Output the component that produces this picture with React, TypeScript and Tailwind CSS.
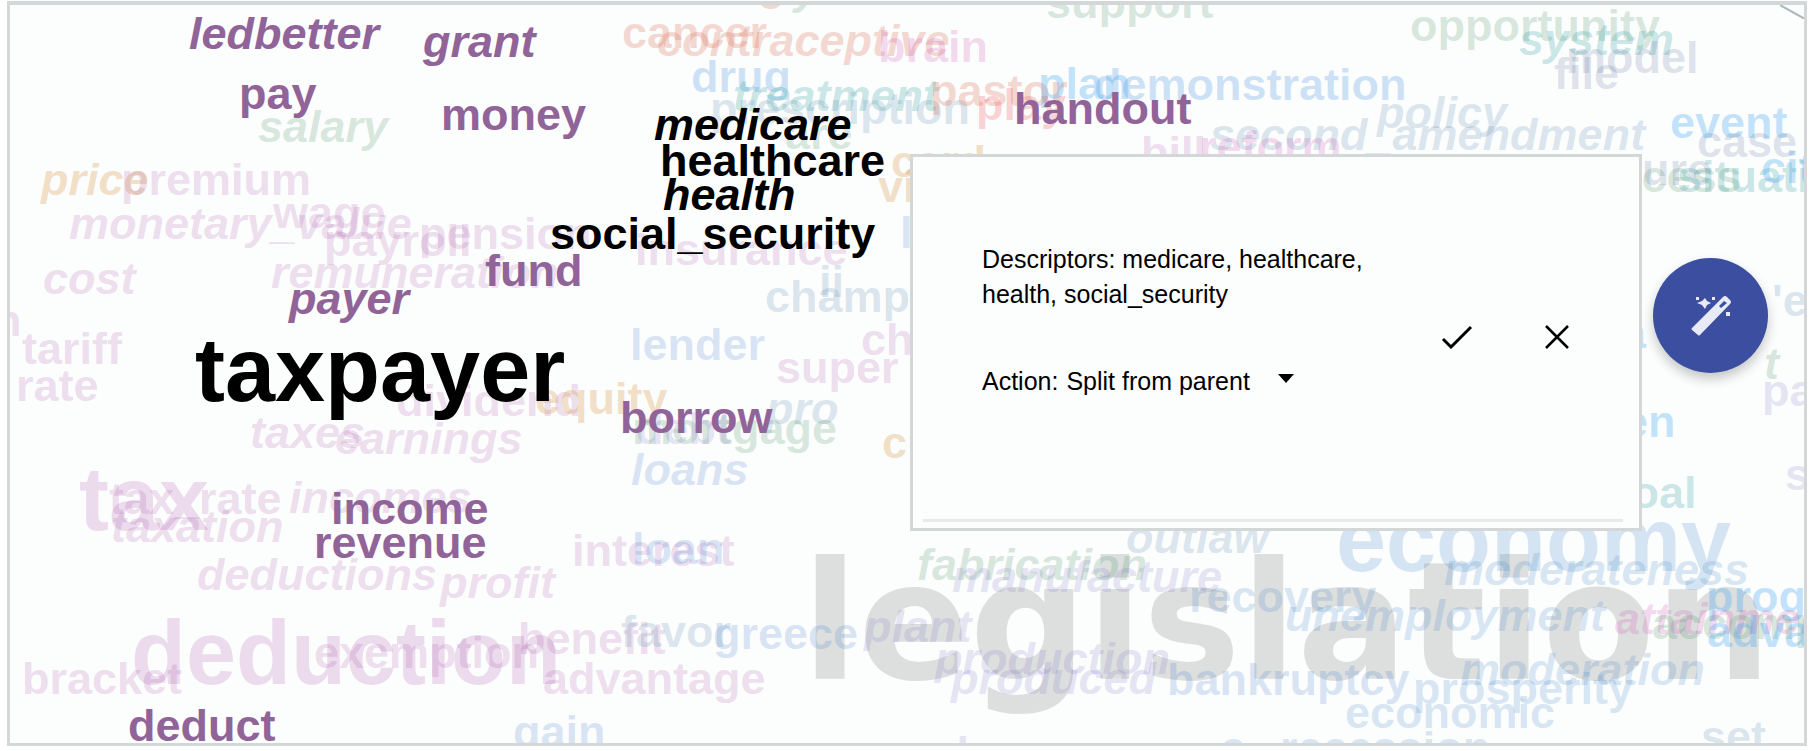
import { useState } from "react";

type Tone =
  | "black"
  | "plum"
  | "mauve"
  | "pink"
  | "salmon"
  | "red"
  | "tan"
  | "green"
  | "teal"
  | "cyan"
  | "sky"
  | "blue"
  | "azure"
  | "slate"
  | "steel"
  | "lavender"
  | "gray";

type Size = "base" | "large" | "huge";

interface Word {
  text: string;
  x: number;
  baseline: number;
  tone: Tone;
  italic?: boolean;
  size?: Size;
}

const toneClass: Record<Tone, string> = {
  black: "text-black",
  plum: "text-[#916499]",
  mauve: "text-[#a040a0]/18",
  pink: "text-[#d040b0]/20",
  salmon: "text-[#d86a50]/26",
  red: "text-[#f04040]/22",
  tan: "text-[#d89440]/30",
  green: "text-[#3c8a5c]/20",
  teal: "text-[#209898]/24",
  cyan: "text-[#30a0f0]/28",
  sky: "text-[#3c90e0]/25",
  blue: "text-[#3c78d0]/20",
  azure: "text-[#3c84c8]/20",
  slate: "text-[#5080a8]/20",
  steel: "text-[#5a6ea0]/20",
  lavender: "text-[#6a60c0]/18",
  gray: "text-[#dddfde]",
};

const sizeClass: Record<Size, string> = {
  base: "text-[45px]",
  large: "text-[90px]",
  huge: "font-['DejaVu_Sans',sans-serif] text-[164px]",
};

const ascent: Record<Size, number> = { base: 38, large: 76, huge: 139 };

const words: Word[] = [
  { text: "legislation", x: 792, baseline: 675, tone: "gray", size: "huge" },
  { text: "salary", x: 248, baseline: 137, tone: "green", italic: true },
  { text: "price", x: 31, baseline: 190, tone: "tan", italic: true },
  { text: "premium", x: 111, baseline: 190, tone: "mauve" },
  { text: "monetary_value", x: 59, baseline: 234, tone: "mauve", italic: true },
  { text: "wage", x: 263, baseline: 223, tone: "mauve" },
  { text: "payroll", x: 314, baseline: 251, tone: "mauve" },
  { text: "pension", x: 409, baseline: 244, tone: "mauve" },
  { text: "remuneration", x: 261, baseline: 283, tone: "mauve", italic: true },
  { text: "cost", x: 33, baseline: 289, tone: "mauve", italic: true },
  { text: "n", x: -16, baseline: 331, tone: "mauve" },
  { text: "tariff", x: 12, baseline: 359, tone: "mauve" },
  { text: "rate", x: 6, baseline: 396, tone: "mauve" },
  { text: "dividend", x: 386, baseline: 411, tone: "mauve" },
  { text: "equity", x: 525, baseline: 409, tone: "tan" },
  { text: "taxes", x: 240, baseline: 443, tone: "mauve", italic: true },
  { text: "earnings", x: 325, baseline: 449, tone: "mauve", italic: true },
  { text: "tax", x: 69, baseline: 525, tone: "mauve", size: "large" },
  { text: "tax_rate", x: 99, baseline: 509, tone: "mauve" },
  { text: "taxation", x: 101, baseline: 537, tone: "mauve", italic: true },
  { text: "incomes", x: 279, baseline: 508, tone: "mauve", italic: true },
  { text: "deductions", x: 187, baseline: 585, tone: "mauve", italic: true },
  { text: "profit", x: 430, baseline: 593, tone: "mauve", italic: true },
  { text: "interest", x: 562, baseline: 561, tone: "mauve" },
  { text: "deduction", x: 121, baseline: 679, tone: "mauve", size: "large" },
  { text: "exemption", x: 304, baseline: 663, tone: "mauve" },
  { text: "benefit", x: 508, baseline: 649, tone: "mauve" },
  { text: "bracket", x: 12, baseline: 689, tone: "mauve" },
  { text: "advantage", x: 533, baseline: 689, tone: "mauve" },
  { text: "gain", x: 503, baseline: 742, tone: "blue" },
  { text: "o", x: 747, baseline: 4, tone: "salmon" },
  { text: "y", x: 784, baseline: -1, tone: "green", italic: true },
  { text: "cancer", x: 612, baseline: 43, tone: "salmon" },
  { text: "contraceptive", x: 647, baseline: 51, tone: "salmon", italic: true },
  { text: "brain", x: 868, baseline: 57, tone: "pink" },
  { text: "drug", x: 681, baseline: 87, tone: "sky" },
  { text: "prescription", x: 700, baseline: 119, tone: "slate" },
  { text: "treatment", x: 723, baseline: 106, tone: "teal", italic: true },
  { text: "pastor", x: 920, baseline: 101, tone: "salmon" },
  { text: "play", x: 966, baseline: 115, tone: "red" },
  { text: "plan", x: 1028, baseline: 94, tone: "cyan" },
  { text: "demonstration", x: 1084, baseline: 95, tone: "sky" },
  { text: "support", x: 1036, baseline: 13, tone: "green" },
  { text: "bill", x: 1131, baseline: 163, tone: "mauve" },
  { text: "reform", x: 1189, baseline: 157, tone: "pink" },
  { text: "are", x: 775, baseline: 144, tone: "green" },
  { text: "card", x: 881, baseline: 172, tone: "tan" },
  { text: "virus", x: 868, baseline: 197, tone: "tan" },
  { text: "insurance", x: 625, baseline: 260, tone: "mauve" },
  { text: "law", x: 890, baseline: 243, tone: "blue" },
  { text: "champion", x: 755, baseline: 307, tone: "slate" },
  { text: "ii", x: 809, baseline: 292, tone: "slate" },
  { text: "lender", x: 620, baseline: 355, tone: "blue" },
  { text: "child", x: 851, baseline: 350, tone: "mauve" },
  { text: "super", x: 766, baseline: 378, tone: "mauve" },
  { text: "pro", x: 756, baseline: 419, tone: "slate", italic: true },
  { text: "mortgage", x: 622, baseline: 439, tone: "green" },
  { text: "debt", x: 626, baseline: 439, tone: "lavender" },
  { text: "loans", x: 621, baseline: 480, tone: "blue", italic: true },
  { text: "c", x: 872, baseline: 453, tone: "tan" },
  { text: "loan", x: 622, baseline: 559, tone: "blue" },
  { text: "favor", x: 611, baseline: 642, tone: "slate" },
  { text: "greece", x: 703, baseline: 644, tone: "blue" },
  { text: "plant", x: 854, baseline: 637, tone: "lavender", italic: true },
  { text: "fabrication", x: 907, baseline: 575, tone: "green", italic: true },
  { text: "manufacture", x: 942, baseline: 587, tone: "lavender", italic: true },
  { text: "production", x: 925, baseline: 669, tone: "lavender", italic: true },
  { text: "produced", x: 941, baseline: 689, tone: "lavender", italic: true },
  { text: "bankruptcy", x: 1157, baseline: 690, tone: "blue" },
  { text: "recovery", x: 1179, baseline: 607, tone: "azure" },
  { text: "outlaw", x: 1116, baseline: 548, tone: "slate", italic: true },
  { text: "purchase", x: 849, baseline: 763, tone: "lavender" },
  { text: "economy", x: 1326, baseline: 566, tone: "azure", size: "large" },
  { text: "moderateness", x: 1434, baseline: 580, tone: "azure", italic: true },
  { text: "unemployment", x: 1275, baseline: 626, tone: "azure", italic: true },
  { text: "moderation", x: 1450, baseline: 680, tone: "azure", italic: true },
  { text: "prosperity", x: 1403, baseline: 699, tone: "azure" },
  { text: "economic", x: 1335, baseline: 723, tone: "azure" },
  { text: "recession", x: 1270, baseline: 758, tone: "azure" },
  { text: "a", x: 1211, baseline: 758, tone: "azure" },
  { text: "set", x: 1691, baseline: 747, tone: "slate" },
  { text: "progress", x: 1696, baseline: 607, tone: "cyan" },
  { text: "attainment", x: 1605, baseline: 629, tone: "pink", italic: true },
  { text: "accomplish", x: 1642, baseline: 634, tone: "green" },
  { text: "advance", x: 1697, baseline: 642, tone: "cyan" },
  { text: "goal", x: 1594, baseline: 503, tone: "teal" },
  { text: "open", x: 1558, baseline: 432, tone: "cyan" },
  { text: "part", x: 1752, baseline: 401, tone: "lavender" },
  { text: "t", x: 1754, baseline: 374, tone: "green", italic: true },
  { text: "sale", x: 1775, baseline: 485, tone: "lavender" },
  { text: "'e", x: 1762, baseline: 311, tone: "slate" },
  { text: "a", x: 1611, baseline: 343, tone: "cyan" },
  { text: "opportunity", x: 1400, baseline: 36, tone: "green" },
  { text: "system", x: 1509, baseline: 50, tone: "teal", italic: true },
  { text: "model", x: 1556, baseline: 68, tone: "steel" },
  { text: "file", x: 1544, baseline: 84, tone: "steel" },
  { text: "policy", x: 1367, baseline: 123, tone: "slate", italic: true },
  { text: "second_amendment", x: 1200, baseline: 145, tone: "slate", italic: true },
  { text: "event", x: 1660, baseline: 133, tone: "cyan" },
  { text: "case", x: 1687, baseline: 152, tone: "steel" },
  { text: "ure", x: 1632, baseline: 180, tone: "steel" },
  { text: "success", x: 1554, baseline: 187, tone: "green" },
  { text: "situation", x: 1667, baseline: 187, tone: "teal" },
  { text: "citizen", x: 1751, baseline: 178, tone: "cyan" },
  { text: "ledbetter", x: 179, baseline: 44, tone: "plum", italic: true },
  { text: "grant", x: 413, baseline: 52, tone: "plum", italic: true },
  { text: "pay", x: 229, baseline: 104, tone: "plum" },
  { text: "money", x: 431, baseline: 125, tone: "plum" },
  { text: "handout", x: 1004, baseline: 119, tone: "plum" },
  { text: "fund", x: 475, baseline: 281, tone: "plum" },
  { text: "payer", x: 279, baseline: 309, tone: "plum", italic: true },
  { text: "borrow", x: 610, baseline: 428, tone: "plum" },
  { text: "income", x: 321, baseline: 519, tone: "plum" },
  { text: "revenue", x: 304, baseline: 553, tone: "plum" },
  { text: "deduct", x: 118, baseline: 736, tone: "plum" },
  { text: "medicare", x: 644, baseline: 135, tone: "black", italic: true },
  { text: "healthcare", x: 650, baseline: 171, tone: "black" },
  { text: "health", x: 653, baseline: 205, tone: "black", italic: true },
  { text: "social_security", x: 540, baseline: 244, tone: "black" },
  { text: "taxpayer", x: 185, baseline: 396, tone: "black", size: "large" },
];

function CloudWord({ text, x, baseline, tone, italic, size = "base" }: Word) {
  return (
    <span
      className={`absolute leading-none font-bold whitespace-nowrap ${sizeClass[size]} ${toneClass[tone]} ${italic ? "italic" : ""}`}
      style={{ left: x, top: baseline - ascent[size] }}
    >
      {text}
    </span>
  );
}

function ActionPanel() {
  const [action, setAction] = useState("split");
  return (
    <section
      aria-label="Descriptor action"
      className="absolute top-[149px] left-[900px] flex w-[732px] flex-col border-3 border-[#d3d7d8] bg-[#fcfdfd] pt-[85px] text-[25px] leading-[35px] text-black"
    >
      <div className="flex items-end justify-between pr-[58px] pl-[69px]">
        <div className="flex w-[400px] flex-col gap-[52px]">
          <p>Descriptors: medicare, healthcare, health, social_security</p>
          <div className="flex items-center gap-2">
            <label htmlFor="action">Action:</label>
            <div className="relative flex w-60 items-center">
              <select
                id="action"
                value={action}
                onChange={(e) => setAction(e.target.value)}
                className="w-full appearance-none bg-transparent outline-none"
              >
                <option value="split">Split from parent</option>
                <option value="merge">Merge with parent</option>
              </select>
              <svg viewBox="0 0 16 9" className="pointer-events-none absolute right-3 bottom-4 h-[9px] w-4" aria-hidden="true">
                <path d="M0 0h16L8 9z" />
              </svg>
            </div>
          </div>
        </div>
        <div className="flex gap-[52px] pb-[38px]">
          <button type="button" aria-label="Apply" className="flex size-12 items-center justify-center">
            <svg viewBox="0 0 32 24" className="h-6 w-8" fill="none" stroke="currentColor" strokeWidth="3" aria-hidden="true">
              <path d="M2 14l8 8L30 2" />
            </svg>
          </button>
          <button type="button" aria-label="Cancel" className="flex size-12 items-center justify-center">
            <svg viewBox="0 0 26 24" className="h-6 w-[26px]" fill="none" stroke="currentColor" strokeWidth="2.5" aria-hidden="true">
              <path d="M2 1l22 22M24 1L2 23" />
            </svg>
          </button>
        </div>
      </div>
      <hr className="mr-4 ml-2.5 mt-[120px] mb-1.5 border-t-3 border-[#e7eaea]" />
    </section>
  );
}

export default function App() {
  return (
    <div className="flex min-h-screen bg-white pt-px pr-2 pb-[5px] pl-[7px] font-['Liberation_Sans',Arial,sans-serif]">
      <main className="relative min-w-0 flex-1 overflow-hidden border-3 border-t-4 border-[#d3d7d8] bg-[#fcfdfd]">
        {words.map((word) => (
          <CloudWord key={`${word.text}-${word.x}`} {...word} />
        ))}
        <svg viewBox="0 0 24 14" className="absolute top-0 right-0 h-3.5 w-6" fill="none" stroke="#a9b9be" strokeWidth="2" aria-hidden="true">
          <path d="M0 0l24 13.500" />
        </svg>
        <ActionPanel />
        <button
          type="button"
          aria-label="Edit cloud"
          className="absolute top-[253px] right-9 flex size-[115px] items-center justify-center rounded-full bg-[#3c4ea0] text-[#e8eaf6] shadow-[0_6px_12px_rgba(0,0,0,0.22)]"
        >
          <svg viewBox="0 0 40 40" className="size-10" aria-hidden="true">
            <path
              fill="currentColor"
              fillRule="evenodd"
              d="M1 32L32 1q2-2 4 0l3 3q2 2 0 4L9 39q-1 1-2 0l-6-5q-1-1 0-2zM28 10l2 2 6-5-3-2z"
            />
            <path fill="currentColor" d="M14 2l2 3 4 2-4 2-2 4-3-4-5-2 5-2zM5 1h3v3H5zM21 1h3v3h-3zM35 16h4v4h-4z" />
          </svg>
        </button>
      </main>
    </div>
  );
}
